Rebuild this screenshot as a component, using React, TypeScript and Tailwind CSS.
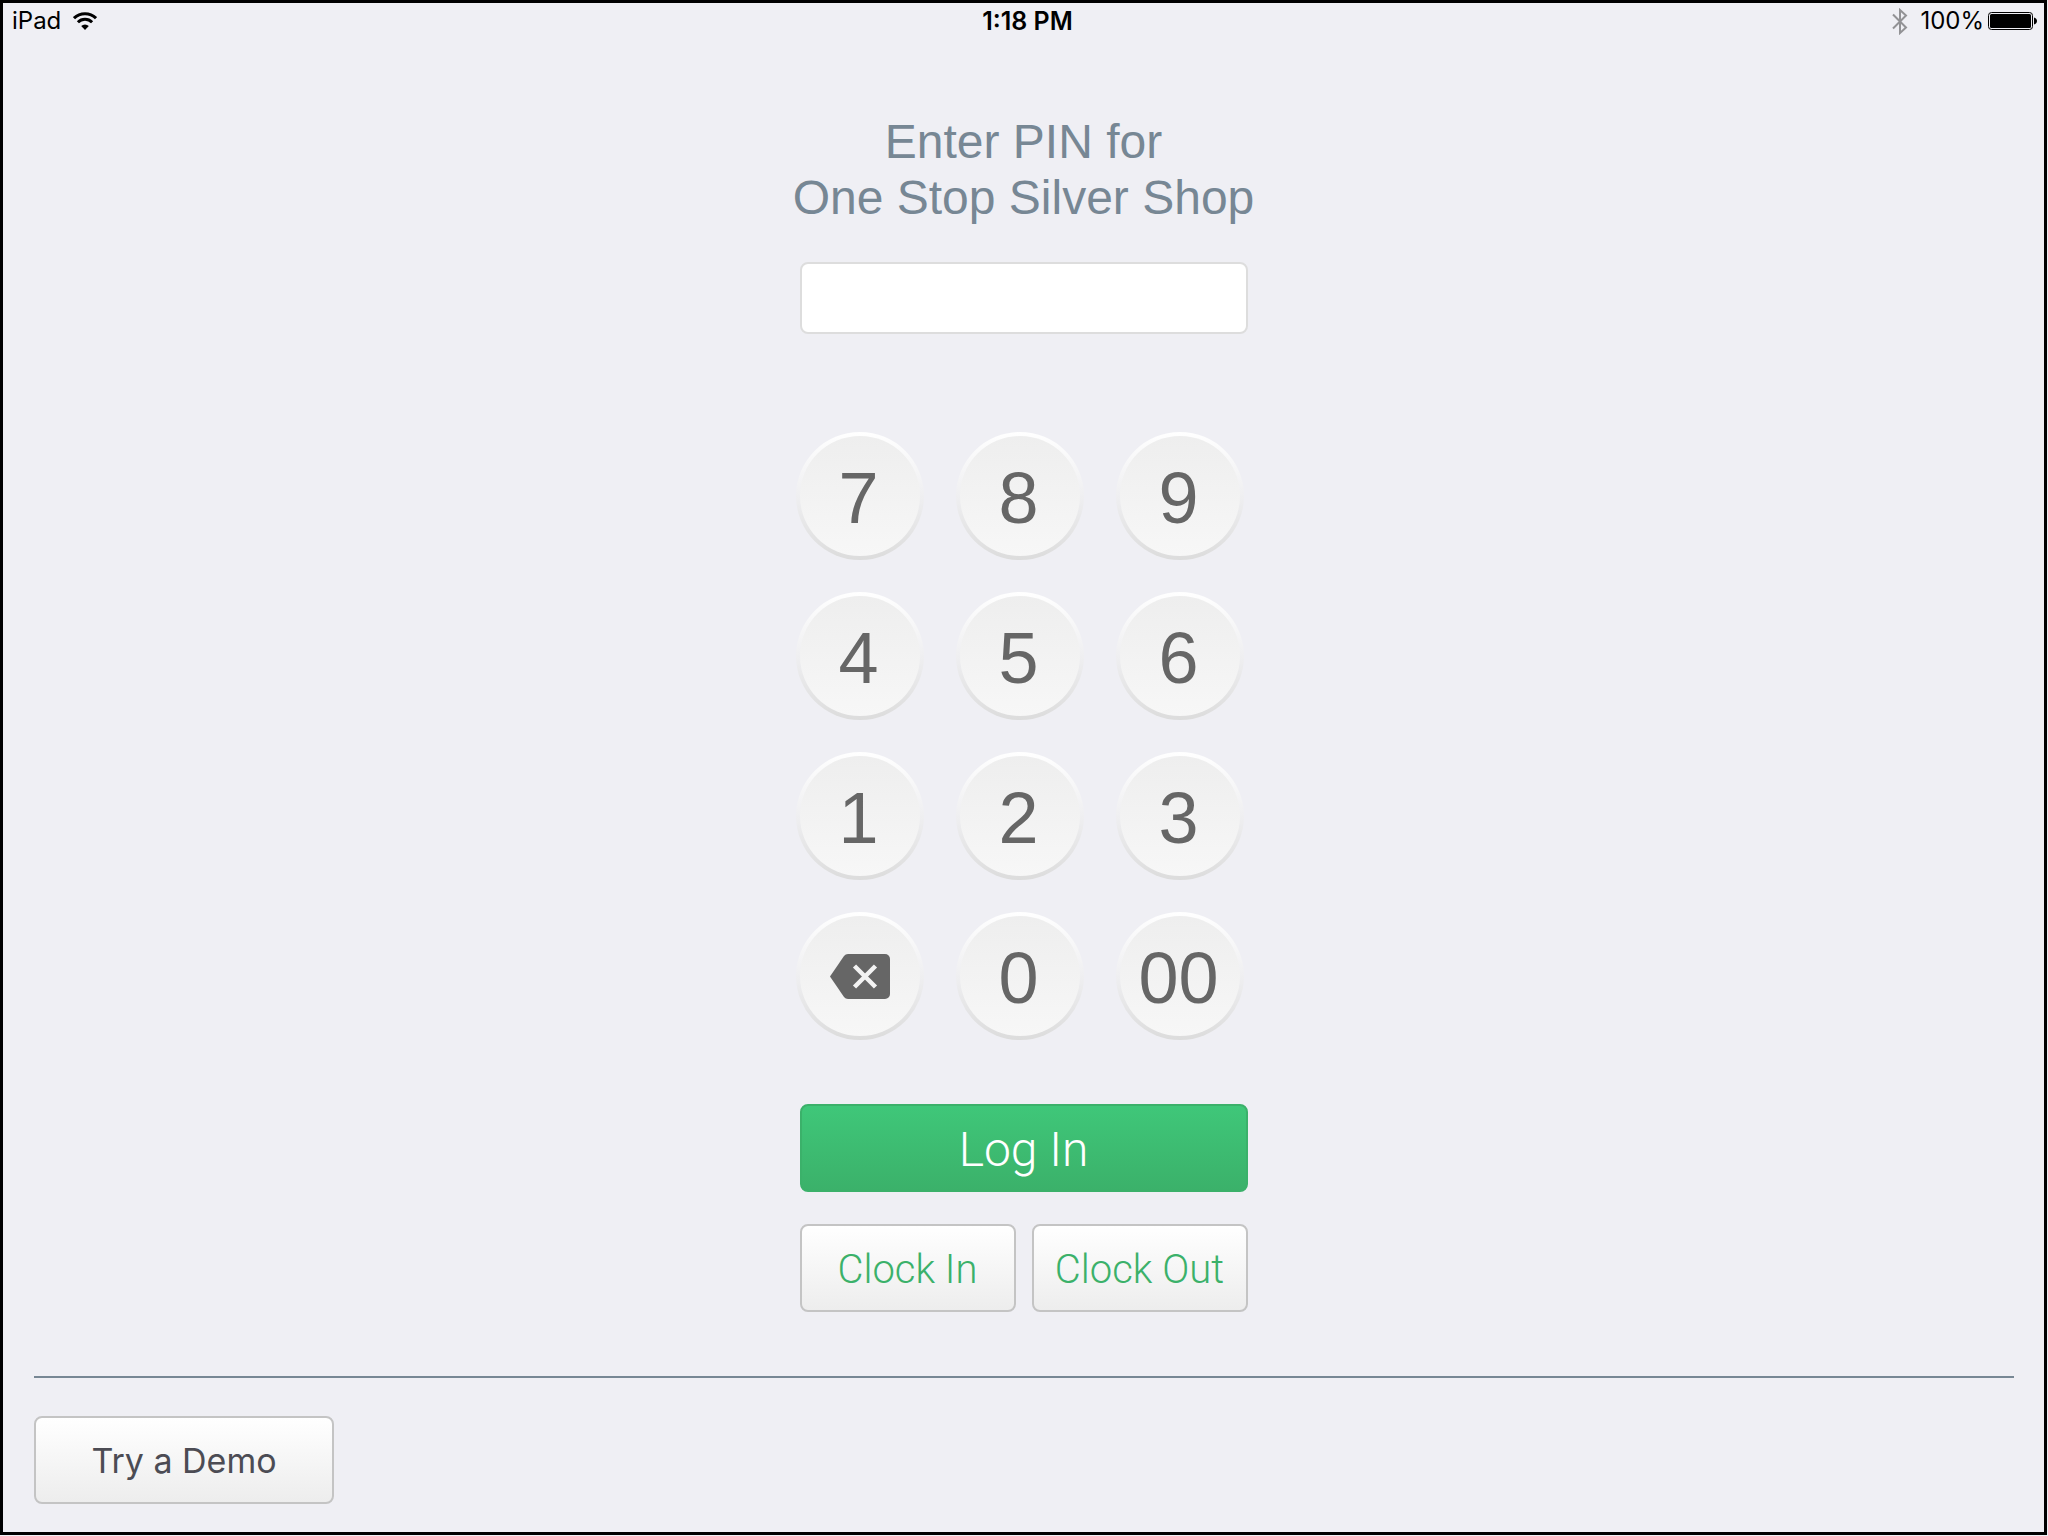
import { useState } from "react";

const rows = [
  ["7", "8", "9"],
  ["4", "5", "6"],
  ["1", "2", "3"],
  ["del", "0", "00"],
];

function WifiIcon() {
  return (
    <svg className="w-6 h-[18px]" viewBox="0 0 24 18" fill="none" aria-hidden="true">
      <path d="M1 6.2a15.6 15.6 0 0 1 22 0" stroke="#000" strokeWidth="3" />
      <path d="M4.9 10.2a10 10 0 0 1 14.2 0" stroke="#000" strokeWidth="3" />
      <path d="M12 18l-3.8-3.9a5.4 5.4 0 0 1 7.6 0z" fill="#000" />
    </svg>
  );
}

function BluetoothIcon() {
  return (
    <svg className="w-4 h-[27px]" viewBox="0 0 16 27" fill="none" aria-hidden="true">
      <path d="M1 6.5L14 19.5L8 25V2L14 7.5L1 20.5" stroke="#929295" strokeWidth="2" />
    </svg>
  );
}

function BatteryIcon() {
  return (
    <svg className="w-[49px] h-[18px]" viewBox="0 0 49 18" fill="none" aria-hidden="true">
      <rect x="0.5" y="0.5" width="44" height="17" rx="3" stroke="#000" />
      <rect x="2" y="2" width="41" height="14" rx="1.5" fill="#000" />
      <path d="M46 5.5c1.7.3 3 1.7 3 3.5s-1.3 3.2-3 3.5z" fill="#000" />
    </svg>
  );
}

function BackspaceIcon() {
  return (
    <svg className="w-[60px] h-[45px]" viewBox="0 0 60 45" aria-hidden="true">
      <path d="M18 0H55a5 5 0 0 1 5 5V40a5 5 0 0 1-5 5H18a5 5 0 0 1-4-2L0 22.5L14 2a5 5 0 0 1 4-2z" fill="#666" />
      <path d="M24.5 12L45.5 33M45.5 12L24.5 33" stroke="#f3f3f3" strokeWidth="4.5" />
    </svg>
  );
}

export default function App() {
  const [pin, setPin] = useState("");

  const press = (key: string) => {
    setPin(key === "del" ? pin.slice(0, -1) : pin + key);
  };

  return (
    <div className="min-h-screen flex flex-col pr-px pb-px bg-[#efeff4] font-['Liberation_Sans',sans-serif]">
      <div className="flex-1 flex flex-col border-3 border-black">
        {/* Status bar */}
        <header className="grid grid-cols-3 items-center h-9 pl-[9px] pr-[7px] font-['Inter',sans-serif] text-2xl text-black">
          <div className="flex items-center gap-3">
            <span>iPad</span>
            <WifiIcon />
          </div>
          <div className="pl-1.5 text-center text-[25px] leading-8 font-semibold">1:18 PM</div>
          <div className="flex items-center justify-end">
            <BluetoothIcon />
            <span className="pl-3 pr-1">100%</span>
            <BatteryIcon />
          </div>
        </header>

        {/* PIN entry */}
        <main className="flex flex-col items-center pt-[75px]">
          <h1 className="text-center text-5xl leading-14 text-[#778794]">
            <label htmlFor="pin">
              Enter PIN for
              <br />
              One Stop Silver Shop
            </label>
          </h1>

          <div className="w-[456px] pt-9">
            <div className="px-1">
              <input
                id="pin"
                type="password"
                value={pin}
                onChange={(e) => setPin(e.target.value)}
                className="block w-full h-18 px-4 rounded-lg border-2 border-[#dddddd] bg-white text-4xl text-center outline-none"
              />
            </div>

            <div className="grid grid-cols-[repeat(3,128px)] gap-8 pt-[98px]">
              {rows.flat().map((key) => (
                <button
                  key={key}
                  type="button"
                  aria-label={key === "del" ? "Delete" : undefined}
                  onClick={() => press(key)}
                  className="size-32 p-1 rounded-full bg-linear-to-b from-white via-[#efeff1] to-[#dcdcdc]"
                >
                  <span className="flex items-center justify-center size-full rounded-full bg-linear-to-b from-[#eeeeee] to-[#f7f7f7] text-7xl text-[#666666]">
                    {key === "del" ? <BackspaceIcon /> : <span className="pt-1 pr-0.5">{key}</span>}
                  </span>
                </button>
              ))}
            </div>

            <div className="grid grid-cols-2 gap-x-4 gap-y-8 px-1 pt-16 font-['Roboto',sans-serif] font-light">
              <button
                type="button"
                className="col-span-2 h-22 pt-1 rounded-lg border-2 border-[#3bb16a] bg-linear-to-b from-[#3fc779] to-[#3bb16a] text-5xl text-white"
              >
                Log In
              </button>
              <button
                type="button"
                className="h-22 pt-1 rounded-lg border-2 border-[#c4c4c4] bg-linear-to-b from-white to-[#ededed] text-[40px] text-[#3bb16a] whitespace-nowrap"
              >
                Clock In
              </button>
              <button
                type="button"
                className="h-22 pt-1 rounded-lg border-2 border-[#c4c4c4] bg-linear-to-b from-white to-[#ededed] text-[40px] text-[#3bb16a] whitespace-nowrap"
              >
                Clock Out
              </button>
            </div>
          </div>
        </main>

        <footer className="mt-auto ml-[31px] mr-[30px] mb-7 pt-[38px] border-t-2 border-[#778794]">
          <button
            type="button"
            className="w-[300px] h-22 rounded-lg border-2 border-[#c4c4c4] bg-linear-to-b from-white to-[#ededed] font-['Inter',sans-serif] text-[34px] text-[#4c4c54]"
          >
            Try a Demo
          </button>
        </footer>
      </div>
    </div>
  );
}
